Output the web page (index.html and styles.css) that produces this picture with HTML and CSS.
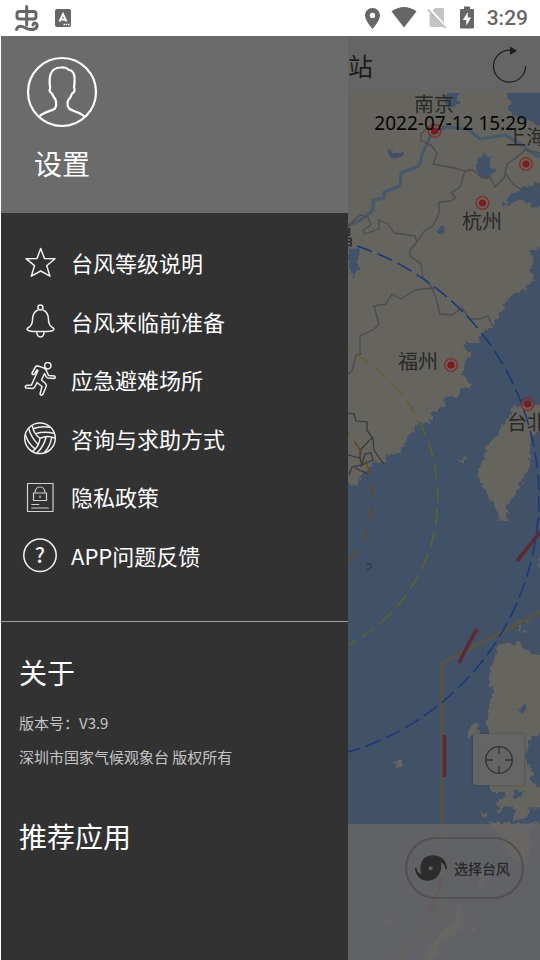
FILE: index.html
```html
<!DOCTYPE html>
<html lang="zh-CN">
<head>
<meta charset="utf-8">
<meta name="viewport" content="width=device-width, initial-scale=1">
<title>设置</title>
<link rel="stylesheet" href="styles.css">
</head>
<body>
<div class="status">
  <div class="status-group status-left">
    <svg width="26" height="28" viewBox="14 4 26 28" fill="none" stroke="#666" stroke-width="3" stroke-linecap="round" stroke-linejoin="round"><rect x="17" y="11.500" width="19" height="7.500" rx="2.500"/><path d="M26.700 6.500V25M16.500 29.500C18 25 22 26 25.500 28C30 30.500 36 30 37 26.500C38 22.500 33 22 33 25"/></svg>
    <svg width="16" height="18" viewBox="0 0 16 18"><rect width="16" height="18" rx="2" fill="#666"/><path d="M4.500 12.500L8 5l3.500 7.500M5.500 10.500h5" fill="none" stroke="#fff" stroke-width="1.800"/><path d="M8.500 15.500h6" stroke="#fff" stroke-width="1.500" stroke-dasharray="1.500 .8"/></svg>
  </div>
  <div class="status-group">
    <svg width="17" height="24" viewBox="0 0 17 24"><path d="M8.500 2C4.300 2 1 5.200 1 9.500C1 14.500 8.500 23 8.500 23S16 14.500 16 9.500C16 5.200 12.700 2 8.500 2Zm0 4.700a2.700 2.700 0 1 1 0 5.400a2.700 2.700 0 0 1 0-5.400Z" fill="#666"/></svg>
    <svg width="26" height="24" viewBox="0 0 26 24"><path d="M.5 5.500C8-.5 18-.5 25.500 5.500L13 21.500Z" fill="#666"/></svg>
    <svg width="20" height="24" viewBox="0 0 20 24"><path d="M8 2h7.500a1.500 1.500 0 0 1 1.500 1.500V19.500a1.500 1.500 0 0 1-1.500 1.500H4a1.500 1.500 0 0 1-1.500-1.500V8Z" fill="#c4c4c4"/><path d="M1.800 2.500L19 21.500" stroke="#fff" stroke-width="3"/><path d="M.8 3.500L18.500 22" stroke="#b5b5b5" stroke-width="1.500"/></svg>
    <svg width="20" height="24" viewBox="0 0 20 24"><path d="M7 .5h6V3h3a1 1 0 0 1 1 1V21.500a1 1 0 0 1-1 1H4a1 1 0 0 1-1-1V4a1 1 0 0 1 1-1h3Z" fill="#666"/><path d="M10.800 6L5.800 14h3.500v5.500L14.200 11.500h-3.400Z" fill="#fff"/></svg>
    <span class="clock">3:29</span>
  </div>
</div>

<div class="app">
  <aside class="drawer">
    <header class="profile">
      <svg width="72" height="72" viewBox="0 0 72 72" fill="none" stroke="#fff" stroke-width="2.200" stroke-linejoin="round"><circle cx="36" cy="36" r="34"/><path d="M13.500 60.500C17 56 25 55.500 29 52.500C30.500 50 30.500 47 29.500 43.500C27 40.500 26.500 38 25.700 37.300C23.500 36 23.500 33.500 24.200 32C22.500 21 24 11.500 35 11.500C38 11 41 12 43 14C48.500 14.500 49.500 21 48 31.500C49.500 34 48 37 46 37.500C45.300 40 44 42.500 42 44.500C41.300 47 41.300 50 43 52.500C47 55.500 54 56 58.500 60.500"/></svg>
      <h1>设置</h1>
    </header>

    <nav class="menu">
      <ul>
        <li><a href="#levels">
          <svg class="icon" viewBox="0 0 36 36"><path d="M18.700 3.500L22.500 13.500L33 13.700L24.700 20.700L28 31.200L18.700 26L9.300 31.200L12.500 20.700L4 13.700L15 13.500Z"/></svg>
          台风等级说明</a></li>
        <li><a href="#prepare">
          <svg class="icon" viewBox="0 0 36 36"><circle cx="18.400" cy="3.500" r="2.500"/><path d="M16 6C11 8 10.500 12 10.500 16C10.500 20 8 23 5.200 24.500C4.500 27 8 27.500 18.500 27.500S32.500 27 31.800 24.500C29 23 26.500 20 26.500 16C26.500 12 26 8 21 6M14.800 28C14.500 34.500 22.500 34.500 22 28"/></svg>
          台风来临前准备</a></li>
        <li><a href="#shelter">
          <svg class="icon" viewBox="0 0 36 36"><circle cx="25.800" cy="3.700" r="3.200"/><path d="M10 11L13.500 5Q14.500 3.500 16 4L22 6Q24 7 24.800 9.500L26.500 13.500L32.500 14Q34 15 32.500 16.500L25.500 16Q24 15 22.500 11.500L19.500 18L23.500 21.500Q25 23 24 25L21 32Q19 34.500 18 32L20 24.500L15 20.500Q13 25.500 11 26.500L4 26Q2.500 24.500 4 23.500L9.500 23L16 8.500L15 8L12 12.500Q10 13 10 11Z"/></svg>
          应急避难场所</a></li>
        <li><a href="#help">
          <svg class="icon" viewBox="0 0 36 36"><circle cx="18" cy="17.300" r="15.300"/>
            <g id="panel"><path d="M18 17.300C14 14.500 11 9.500 10.300 4.500M13.300 12.700C19.500 11 27 11 32.300 12.500M11 7.700C17 5.500 24 5.300 28.500 6.500"/></g>
            <use href="#panel" transform="rotate(120 18 17.300)"/><use href="#panel" transform="rotate(240 18 17.300)"/></svg>
          咨询与求助方式</a></li>
        <li><a href="#privacy">
          <svg class="icon thin" viewBox="0 0 36 36"><path d="M5.500 4.500h25.500v28H5.500ZM11.500 14h13v7.500h-13ZM13 14C13 6 23 6 23 14M18 16.500v2.500M9.300 25.500h8M9.300 29h17.500"/></svg>
          隐私政策</a></li>
        <li><a href="#feedback">
          <svg class="icon" viewBox="0 0 36 36"><circle cx="18" cy="17.300" r="16.200"/><text class="mark" x="18" y="25">?</text></svg>
          APP问题反馈</a></li>
      </ul>
    </nav>

    <section class="about">
      <h2>关于</h2>
      <p>版本号：V3.9</p>
      <p>深圳市国家气候观象台 版权所有</p>
    </section>
    <section class="apps">
      <h2>推荐应用</h2>
    </section>
  </aside>

  <main class="content">
    <header class="topbar">
      <span class="topbar-title">站</span>
      <button class="refresh" type="button" aria-label="刷新">
        <svg width="36" height="40" viewBox="491 45 36 40"><path d="M525.500 66A16 16 0 1 1 510 50.200" fill="none" stroke="#1e1e1e" stroke-width="1.200"/><path d="M510 46.500L517 50.700L510 55Z" fill="#1e1e1e"/></svg>
      </button>
    </header>

    <div class="map">
      <svg class="chart" viewBox="348 93 192 867" preserveAspectRatio="xMinYMin slice">
        <defs>
          <filter id="rough" x="-5%" y="-5%" width="110%" height="110%" color-interpolation-filters="sRGB"><feTurbulence type="fractalNoise" baseFrequency=".18" numOctaves="4" seed="4"/><feDisplacementMap in="SourceGraphic" scale="9" xChannelSelector="R" yChannelSelector="G"/></filter>
          <g id="city"><circle r="6.300" fill="none" stroke="#852a2a" stroke-width="1.300"/><circle r="3.600" fill="#7a1c1c"/></g>
        </defs>
        <g filter="url(#rough)" fill="#66645f">
          <path d="M335 80H507V93L510 103V113L520 120L530 122L550 129V182L535 183L523 187L513 192L503 205L512 203L522 200L532 205L550 218V246L532 250L533 260L530 270L535 280L523 290L513 293L507 300L500 313L493 325L483 333L477 343L463 343L465 352L472 355L463 363V374L470 385L462 388L457 397L443 397L447 405L433 412L430 423L417 423L412 433L403 445L400 453L390 453L383 462L373 462L370 470L363 471L357 482L335 487Z"/>
          <path d="M550 405L527 405L513 407L507 420L497 433L487 447L482 463L478 478L484 490L487 498L497 507L500 520L507 520L508 505L517 492L523 480L530 467V440L535 433L550 426Z"/>
          <path d="M550 659L540 657L527 650L520 644L507 643L497 646L493 663L489 678L492 690V703L488 707V732L493 737V780L490 785L493 792L507 793L498 800L499 814L507 806L515 808L513 820L527 819V811L550 805V792L532 783V770L525 757L528 747L532 737L550 733Z"/>
          <path d="M473 722L469 728V737H475L482 732L477 728ZM396 760H402V767L397 769ZM478 811L487 814L485 818ZM350 475L362 478L357 484H348ZM520 620h8v3h-6ZM518 621v9h2v-9ZM521 631h6v2h-6ZM538 562l5-4v10h-5ZM461 457l3 1v4h-4Z"/>
          <path d="M486 823L500 835L503 843L510 855L527 867L531 843L527 830L543 823ZM457 900L455 920L440 932L420 962H432L440 942L463 930L465 920L460 908ZM468 927h9l-5 5ZM356 934h6v3h-7ZM386 920h6v4h-7ZM480 870l6 3-5 16-4-1Z"/>
        </g>
        <g filter="url(#rough)" fill="#415167">
          <path d="M385 147L393 152H405L401 158L392 160ZM474 165L483 154L490 158V168L497 170L490 178H480ZM348 248H360L358 270L352 280L348 260ZM435 232l6-5 8 1-7 7ZM444 93l14-1v12l-9 5ZM519 708l8-4-2 7-5 2ZM514 791h9l-3 8-6-2Z"/>
        </g>
        <path d="M348 226L361 220L373 210V200L384 198V192L400 186L401 173L419 166L422 155L431 135L447 127L468 129L480 139L505 135L520 144L535 155L542 158" fill="none" stroke="#46586c" stroke-width="3"/>
        <g fill="none" stroke="#4c4c4d" stroke-width="1.300" stroke-linejoin="round">
          <path d="M348 226L360 215L368 217L371 225L363 230L365 234L379 229L379 220L388 224L394 233L415 236L417 242L425 230L433 226L439 213V202L450 201L456 198L451 193L460 187L465 171L455 168L444 166L433 164L437 153L431 145L421 141V134L432 124L445 127"/>
          <path d="M465 171L473 170L482 178L490 177L495 187L504 178L507 164L516 158L525 150L540 153M506 174L513 184L522 190L540 185"/>
          <path d="M417 242L410 250V256L421 264L423 278L432 287M415 290L401 299L392 294L386 304L374 306L379 324L373 330L360 336V353L361 354L356 355L352 371L348 374M415 290L422 289L434 288"/>
          <path d="M432 287L436 298L440 314L452 315L462 308L470 319H480L488 316L493 327"/>
        </g>
        <path d="M348 413L354 414L356 421L367 422V430L373 439L374 450L380 459L384 464M373 437L360 450V458L348 455M360 458L362 465L352 467L349 475M362 465L373 460L371 453L365 454L361 467M355 468L368 474" fill="none" stroke="#363738" stroke-width="1.200"/>
        <path d="M366 564h5v4l-4 2M366 569l3 1" fill="none" stroke="#263849" stroke-width="1"/>
        <path d="M542 611L442 663V912L396 962" fill="none" stroke="#535448" stroke-width="4"/>
        <g fill="none" stroke="#5d2937" stroke-width="3.600"><path d="M542 530L517 561M477 629L468 645L459 663"/><path d="M444.500 735V777"/><path d="M443 877L433 905L427 914"/></g>
        <g fill="none" stroke-width="1.500">
          <path d="M357 246A265 265 0 0 1 348 752" stroke="#173879" stroke-dasharray="16 6"/>
          <path d="M348 350A166 166 0 0 1 348 645" stroke="#60632a" stroke-dasharray="16 7" stroke-dashoffset="14"/>
          <path d="M348 433A98 98 0 0 1 348 563" stroke="#65491f" stroke-dasharray="15 8" stroke-dashoffset="13"/>
        </g>
        <use href="#city" x="434.500" y="131"/><use href="#city" x="526" y="164"/><use href="#city" x="482.500" y="203"/><use href="#city" x="451" y="365"/><use href="#city" x="527.500" y="404"/>
        <g class="places"><text x="414" y="112">南京</text><text x="506" y="145">上海</text><text x="462" y="229">杭州</text><text x="398" y="369">福州</text><text x="507" y="430">台北</text><text x="334" y="245">昌</text></g>
      </svg>
      <div class="overlay">
        <time class="stamp" datetime="2022-07-12T15:29">2022-07-12 15:29</time>
        <button class="locate" type="button" aria-label="定位">
          <svg width="30" height="30" viewBox="0 0 30 30" fill="none" stroke="#303030" stroke-width="1.300"><circle cx="15" cy="15" r="13.300"/><path d="M15 2v7M15 21v7M2 15h7M21 15h7"/></svg>
        </button>
      </div>
      <div class="panel">
        <button class="choose" type="button">
          <svg width="32" height="28" viewBox="0 0 32 28"><path fill-rule="evenodd" d="M6 10C7.500 4 12.500 1.300 18 1.300C27.500 1.300 32 8 32 15.300H30.500C30 11.500 28.500 9 25.500 8.500C28.500 17 22 26.700 13 26.700C4.500 26.700 0 20.500 0 13.700H1.500C2 17 3.500 19.500 6.500 20C5 17 5 13 6 10ZM15.700 12.300a2 2 0 1 0 0 4a2 2 0 0 0 0-4Z" fill="#2c2c2c"/></svg>
          <span>选择台风</span>
        </button>
      </div>
    </div>
  </main>
</div>
</body>
</html>
```
FILE: styles.css
```css
* {
  box-sizing: border-box;
}

body {
  margin: 0;
  min-height: 100vh;
  display: flex;
  flex-direction: column;
  background: #fff;
  font-family: "Noto Sans CJK SC", sans-serif;
}

h1,
h2,
p,
ul {
  margin: 0;
  padding: 0;
  font-weight: 400;
}

svg {
  display: block;
  flex: none;
}

button {
  padding: 0;
  border: 0;
  background: none;
  font: inherit;
}

.status {
  height: 36px;
  display: flex;
  align-items: center;
  justify-content: space-between;
  padding: 0 12px 0 14px;
}

.status-group {
  display: flex;
  align-items: center;
  gap: 10px;
}

.status-left {
  gap: 15px;
}

.clock {
  color: #666;
  font: 500 21px/24px Roboto, sans-serif;
}

.app {
  flex: 1;
  display: flex;
  padding-left: 1px;
}

.drawer {
  width: 64.4%;
  background: #323232;
  color: #fff;
}

.profile {
  padding: 20px 25px 30px;
  background: #6b6b6b;
}

.profile h1 {
  margin-top: 15px;
  padding-left: 8px;
  font-size: 28px;
  line-height: 40px;
}

.menu {
  padding: 20px 0 37px;
  border-bottom: 1px solid #a0a0a0;
}

.menu ul {
  min-height: 351px;
  display: grid;
  grid-auto-rows: 1fr;
  list-style: none;
}

.menu a {
  height: 100%;
  display: flex;
  align-items: center;
  gap: 13px;
  padding-left: 21px;
  color: #fff;
  font-size: 22px;
  line-height: 32px;
  text-decoration: none;
}

.icon {
  width: 36px;
  height: 36px;
  margin-top: 2px;
  fill: none;
  stroke: #f0f0f0;
  stroke-width: 1.5;
  stroke-linejoin: round;
}

.thin {
  stroke: #d0d0d0;
  stroke-width: 1.2;
}

.mark {
  fill: #f0f0f0;
  stroke: none;
  font: 500 21px "Noto Sans CJK SC", sans-serif;
  text-anchor: middle;
}

.about,
.apps {
  padding: 30px 18px 0;
}

.apps {
  padding-top: 42px;
}

.drawer h2 {
  font-size: 28px;
  line-height: 40px;
}

.about h2 {
  margin-bottom: 14px;
}

.about p {
  color: #c4c4c4;
  font-size: 15px;
  line-height: 34px;
}

.content {
  flex: 1;
  min-width: 0;
  display: flex;
  flex-direction: column;
}

.topbar {
  height: 57px;
  display: flex;
  align-items: center;
  justify-content: space-between;
  padding-right: 13px;
  background: #656565;
  color: #1c1c1c;
}

.topbar-title {
  font-size: 25px;
  line-height: 36px;
}

.map {
  position: relative;
  flex: 1;
  display: flex;
  flex-direction: column;
  overflow: hidden;
  background: #415167;
}

.chart {
  position: absolute;
  inset: 0;
  width: 100%;
  height: 100%;
}

.places {
  fill: #29292a;
  font-size: 20px;
}

.overlay {
  position: relative;
  flex: 1;
  display: flex;
  flex-direction: column;
  align-items: flex-end;
  justify-content: space-between;
  padding: 15px 13px 39px 0;
}

.stamp {
  color: #050505;
  font-family: "Noto Sans", sans-serif;
  font-size: 19px;
  line-height: 30px;
  white-space: nowrap;
}

.locate {
  width: 51px;
  height: 51px;
  display: grid;
  place-items: center;
  margin-right: 3px;
  border-radius: 3px;
  background: #656565;
  box-shadow: 0 0 3px rgba(0, 0, 0, 0.3);
}

.panel {
  position: relative;
  min-height: 136px;
  display: flex;
  align-items: flex-start;
  justify-content: flex-end;
  padding: 13px 16px;
  background: rgba(104, 103, 103, 0.8);
}

.choose {
  height: 62px;
  display: flex;
  align-items: center;
  gap: 7px;
  padding: 0 12px 0 8px;
  border: 2px solid #525150;
  border-radius: 31px;
  color: #292929;
  font-size: 14px;
  font-weight: 500;
  white-space: nowrap;
}
```
